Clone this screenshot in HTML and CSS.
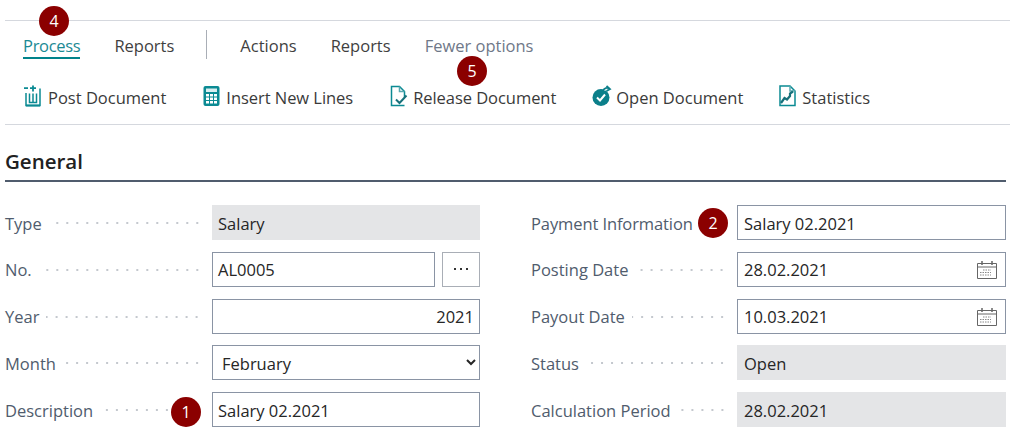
FILE: index.html
```html
<!DOCTYPE html>
<html lang="en">
<head>
<meta charset="utf-8">
<title>Salary document</title>
<link rel="stylesheet" href="styles.css">
</head>
<body>
<div class="page">
  <nav class="tabs">
    <span class="tab tab-active">Process<span class="badge badge-4">4</span></span>
    <span class="tab">Reports</span>
    <span class="tab-divider"></span>
    <span class="tab">Actions</span>
    <span class="tab">Reports</span>
    <span class="tab tab-muted">Fewer options</span>
  </nav>
  <div class="actions">
    <span class="action action-post">
      <svg class="icon" width="20" height="22" viewBox="0 0 20 22" fill="none" stroke="#0b8a93" stroke-width="1.5"><path d="M1 3.2h4M10 .5v6M7 3.2h6" stroke-width="1.8"/><path d="M3 8v12.5h14V3.5M6.500 8.500v9h7v-9M10 8.500v9" /><path d="M3 20.500h14" stroke-width="2"/></svg>
      Post Document
    </span>
    <span class="action action-calc">
      <svg class="icon" width="17" height="22" viewBox="0 0 17 22"><rect x=".5" y="1" width="16" height="20" rx="2" fill="#0b8a93"/><rect x="3" y="3.500" width="11" height="3.500" fill="#d9eef0"/><path d="M3 9h3v2.500H3zM7 9h3v2.500H7zM11 9h3v2.500h-3zM3 12.500h3V15H3zM7 12.500h3V15H7zM11 12.500h3V15h-3zM3 16h3v2.500H3zM7 16h3v2.500H7zM11 16h3v2.500h-3z" fill="#fff"/></svg>
      Insert New Lines
    </span>
    <span class="action action-release">
      <svg class="icon" width="18" height="22" viewBox="0 0 18 22" fill="none" stroke="#0b8a93" stroke-width="1.500"><path d="M14.500 12V6.500L9.500 1.500H1.500v19h13"/><path d="M9.500 1.500v5h5" stroke="#5aa9b0"/><path d="M6 14.500l3.500 3.500 7-7.500" stroke="#17707a" stroke-width="2"/></svg>
      Release Document
    </span>
    <span class="action action-open">
      <svg class="icon" width="20" height="22" viewBox="0 0 20 22" fill="none"><circle cx="9" cy="12.500" r="8.500" fill="#0b7f8a"/><path d="M5 12.500l3 3 5-6" stroke="#fff" stroke-width="2"/><path d="M11 6c1-3 4-4 7-2M14.500 1l3.500 3-3.500 2" stroke="#0b7f8a" stroke-width="1.800" fill="#fff"/></svg>
      Open Document
    </span>
    <span class="action action-stats">
      <svg class="icon" width="17" height="22" viewBox="0 0 17 22" fill="none" stroke="#0b8a93" stroke-width="1.500"><path d="M11 1H1v19.500h15V6z"/><path d="M11 1v5h5" stroke="#5aa9b0"/><path d="M2 18l3.500-5 2.500 1.500 3-3.500v-2.500l3-2" stroke="#17707a" stroke-width="2.200"/></svg>
      Statistics
    </span>
    <span class="badge badge-5">5</span>
  </div>
  <h2 class="section-title">General</h2>
  <div class="form">
    <div class="column">
      <div class="row">
        <div class="label"><span>Type</span><i class="leader"></i></div>
        <div class="field field-readonly">Salary</div>
      </div>
      <div class="row">
        <div class="label"><span>No.</span><i class="leader"></i></div>
        <div class="field-group">
          <div class="field">AL0005</div>
          <div class="more-button"><svg width="16" height="4" viewBox="0 0 16 4" fill="#333"><rect x="1" y="1" width="2" height="2"/><rect x="7" y="1" width="2" height="2"/><rect x="13" y="1" width="2" height="2"/></svg></div>
        </div>
      </div>
      <div class="row">
        <div class="label"><span>Year</span><i class="leader"></i></div>
        <div class="field field-number">2021</div>
      </div>
      <div class="row">
        <div class="label"><span>Month</span><i class="leader"></i></div>
        <select class="field field-select"><option>February</option></select>
      </div>
      <div class="row">
        <div class="label"><span>Description</span><i class="leader"></i><span class="badge badge-1">1</span></div>
        <div class="field">Salary 02.2021</div>
      </div>
    </div>
    <div class="column column-right">
      <div class="row">
        <div class="label label-tight"><span>Payment Information</span><span class="badge badge-2">2</span></div>
        <div class="field">Salary 02.2021</div>
      </div>
      <div class="row">
        <div class="label"><span>Posting Date</span><i class="leader"></i></div>
        <div class="field field-date">28.02.2021
          <svg class="calendar" width="20" height="20" viewBox="0 0 20 20" fill="none" stroke="#666"><path d="M.5 3.500h19v15H.5zM.5 7h19" /><path d="M5 1v4M15 1v4" stroke-width="1.500"/><path d="M6 10h8M3 12.500h11M3 15h11" stroke="#888" stroke-dasharray="1.500 1"/></svg>
        </div>
      </div>
      <div class="row">
        <div class="label"><span>Payout Date</span><i class="leader"></i></div>
        <div class="field field-date">10.03.2021
          <svg class="calendar" width="20" height="20" viewBox="0 0 20 20" fill="none" stroke="#666"><path d="M.5 3.500h19v15H.5zM.5 7h19" /><path d="M5 1v4M15 1v4" stroke-width="1.500"/><path d="M6 10h8M3 12.500h11M3 15h11" stroke="#888" stroke-dasharray="1.500 1"/></svg>
        </div>
      </div>
      <div class="row">
        <div class="label"><span>Status</span><i class="leader"></i></div>
        <div class="field field-readonly">Open</div>
      </div>
      <div class="row">
        <div class="label"><span>Calculation Period</span><i class="leader"></i></div>
        <div class="field field-readonly">28.02.2021</div>
      </div>
    </div>
  </div>
</div>
</body>
</html>
```
FILE: styles.css
```css
* { box-sizing: border-box; }
html, body { margin: 0; background: #fff; }
body {
  font-family: "Open Sans", "Noto Sans", sans-serif;
  font-size: 16.500px;
  color: #212121;
  overflow: hidden;
}
.page {
  position: relative;
  width: 1010px;
  height: 429px;
  padding: 20px 4px 0 5px;
  overflow: hidden;
}
.tabs {
  display: flex;
  align-items: flex-start;
  height: 40px;
  margin-right: -4px;
  padding: 13px 0 0 18px;
  border-top: 1px solid #d5d8de;
  color: #3f3f3f;
}
.tab { position: relative; height: 25px; line-height: 24px; margin-right: 34px; }
.tab-active { color: #1b8a94; border-bottom: 2px solid #00838a; letter-spacing: -0.3px; }
.tab-muted { color: #6f7888; }
.tab-divider { width: 1px; height: 29px; margin: -4px 33px 0 -2px; background: #a9aeb6; }
.actions {
  position: relative;
  display: flex;
  align-items: center;
  height: 65px;
  margin-right: -4px;
  padding: 11px 0 0 18px;
  border-bottom: 1px solid #d5d8de;
  color: #3a3a3a;
}
.action { display: flex; align-items: center; gap: 5px; white-space: nowrap; }
.icon { flex: none; margin-top: -4px; }
.action-post { margin-right: 37px; }
.action-calc { gap: 6px; margin-right: 37px; letter-spacing: -0.05px; }
.action-release { margin-right: 36px; letter-spacing: -0.05px; }
.action-open { gap: 4px; margin-right: 36px; }
.action-stats { gap: 6px; }
.section-title {
  margin: 0;
  height: 57px;
  padding-top: 22px;
  font-size: 20.500px;
  line-height: 28px;
  font-weight: 600;
  color: #212121;
  border-bottom: 2px solid #505c6d;
}
.form {
  display: grid;
  grid-template-columns: 475px 475px;
  column-gap: 51px;
  padding-top: 23px;
}
.column { display: flex; flex-direction: column; gap: 11.750px; }
.row { display: flex; align-items: center; height: 35px; }
.label {
  position: relative;
  display: flex;
  align-items: center;
  flex: 0 0 207px;
  padding: 1px 10px 0 0;
  color: #505c6d;
}
.label-tight { letter-spacing: -0.1px; }
.column-right .label { flex-basis: 206px; }
.leader {
  flex: 1;
  height: 2px;
  margin-left: 7px;
  background-image: radial-gradient(circle, #c4c8ce 0.9px, transparent 1.1px);
  background-size: 10px 2px;
  background-position: right center;
}
.field {
  flex: 1;
  display: flex;
  align-items: center;
  width: 100%;
  height: 35px;
  padding: 1px 5px 0;
  border: 1px solid #8a94a4;
  background: #fff;
  color: #262626;
  font: inherit;
}
.column-right .field { padding-left: 6px; }
.field-readonly { border-color: #e4e5e7; background: #e4e5e7; }
.field-number { justify-content: flex-end; }
.field-date { justify-content: space-between; }
.field-select { border-radius: 0; }
.calendar { flex: none; margin-right: 3px; }
.field-group { flex: 1; display: flex; gap: 7px; }
.more-button {
  flex: 0 0 38px;
  display: flex;
  align-items: center;
  justify-content: center;
  height: 35px;
  border: 1px solid #a9aeb6;
}
.badge {
  position: absolute;
  display: flex;
  align-items: center;
  justify-content: center;
  width: 30px;
  height: 30px;
  border-radius: 50%;
  background: #8b0000;
  color: #fff;
  font-size: 16px;
  letter-spacing: 0;
}
.badge-4 { left: 16px; top: -28px; }
.badge-5 { left: 452px; top: -4px; }
.badge-1 { left: 166px; top: -1px; }
.badge-2 { left: 167px; top: -3px; }
```
